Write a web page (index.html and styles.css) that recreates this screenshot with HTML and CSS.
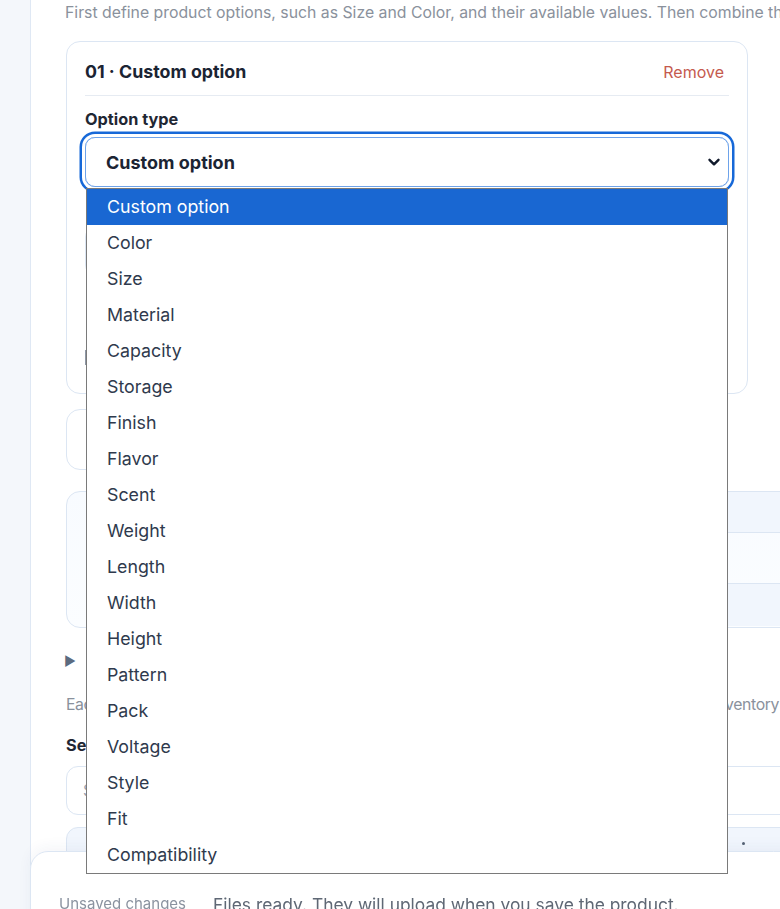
FILE: index.html
```html
<!DOCTYPE html>
<html lang="en">
<head>
    <meta charset="UTF-8">
    <meta name="viewport" content="width=device-width, initial-scale=1.0">
    <title>Product options</title>
    <link rel="stylesheet" href="styles.css">
</head>
<body>
    <div class="page">
        <main class="panel">
            <p class="intro">First define product options, such as Size and Color, and their available values. Then combine them into variants.</p>

            <section class="option-card">
                <header class="option-head">
                    <h3>01 · Custom option</h3>
                    <button class="remove">Remove</button>
                </header>

                <label class="field-label">Option type</label>
                <div class="select-wrap">
                    <div class="select">
                        <span>Custom option</span>
                        <svg class="chevron" width="14" height="14" viewBox="0 0 14 14">
                            <path d="M2.5 4.8 L7 9.3 L11.5 4.8" fill="none" stroke="#111a2c" stroke-width="2.4" stroke-linecap="round" stroke-linejoin="round"/>
                        </svg>
                    </div>
                    <ul class="select-menu">
                        <li class="active">Custom option</li>
                        <li>Color</li>
                        <li>Size</li>
                        <li>Material</li>
                        <li>Capacity</li>
                        <li>Storage</li>
                        <li>Finish</li>
                        <li>Flavor</li>
                        <li>Scent</li>
                        <li>Weight</li>
                        <li>Length</li>
                        <li>Width</li>
                        <li>Height</li>
                        <li>Pattern</li>
                        <li>Pack</li>
                        <li>Voltage</li>
                        <li>Style</li>
                        <li>Fit</li>
                        <li>Compatibility</li>
                    </ul>
                </div>

                <div class="input"></div>
                <div class="value-row">
                    <span class="value-tag"></span>
                </div>
            </section>

            <div class="add-option"></div>

            <div class="variants-box">
                <div class="row head"></div>
                <div class="row"></div>
                <div class="row alt"></div>
            </div>

            <div class="advanced"><span class="caret">▶</span></div>

            <p class="hint">Each combination of option values becomes a separate variant with its own price, SKU and inventory</p>

            <label class="field-label search-label">Search variants</label>
            <div class="search">Search by SKU or value</div>

            <div class="table-head"><span class="dot"></span></div>
        </main>

        <footer class="save-bar">
            <span class="status">Unsaved changes</span>
            <span class="files">Files ready. They will upload when you save the product.</span>
        </footer>
    </div>
</body>
</html>
```

FILE: styles.css
```css
* {
    margin: 0;
    padding: 0;
    box-sizing: border-box;
}

body {
    font-family: Inter, "Noto Sans", sans-serif;
    background: #f4f7fb;
    color: #1f2937;
    overflow: hidden;
}

.page {
    height: 909px;
    padding-left: 30px;
    overflow: hidden;
}

.panel {
    width: 1100px;
    min-height: 909px;
    background: #fff;
    border-left: 1px solid #dfe8f4;
    padding: 3px 0 0 35px;
}

.intro {
    margin-left: -1px;
    font-size: 15.8px;
    line-height: 20px;
    color: #8a919c;
    white-space: nowrap;
}

.option-card {
    width: 682px;
    height: 353px;
    margin-top: 18px;
    border: 1px solid #dce6f3;
    border-radius: 14px;
    padding: 0 18px;
}

.option-head {
    display: flex;
    justify-content: space-between;
    align-items: center;
    padding: 19px 0 12px;
    border-bottom: 1px solid #e6ebf2;
}

.option-head h3 {
    font-size: 17.8px;
    line-height: 22px;
    font-weight: 700;
    color: #1b2433;
}

.remove {
    background: none;
    border: none;
    font-family: inherit;
    font-size: 16px;
    color: #c55a4e;
    padding-right: 5px;
    cursor: pointer;
}

.field-label {
    display: block;
    margin-top: 13px;
    font-size: 16.3px;
    line-height: 20px;
    font-weight: 700;
    color: #1f2733;
}

.select-wrap {
    position: relative;
    margin-top: 8px;
}

.select {
    height: 50px;
    border: 1px solid #6ea3ea;
    border-radius: 10px;
    display: flex;
    align-items: center;
    justify-content: space-between;
    padding: 0 7px 0 20px;
    font-size: 18px;
    font-weight: 700;
    color: #1b2433;
    box-shadow: 0 0 0 3px #fff, 0 0 0 5.5px #1668d8;
}

.select-menu {
    position: absolute;
    top: 51px;
    left: 1px;
    right: 1px;
    list-style: none;
    background: #fff;
    border: 1px solid #7a7a7a;
    z-index: 20;
}

.select-menu li {
    height: 36px;
    line-height: 36px;
    padding-left: 20px;
    font-size: 17.8px;
    color: #2f3a4d;
}

.select-menu li.active {
    background: #1967d2;
    color: #fff;
}

.input {
    width: 600px;
    margin-top: 40px;
    height: 48px;
    border: 1px solid #dce6f3;
    border-radius: 10px;
}

.value-row {
    margin-top: 74px;
}

.value-tag {
    display: inline-block;
    height: 15px;
    width: 40px;
    border-left: 2px solid #8f98a6;
}

.add-option {
    width: 440px;
    height: 61px;
    margin-top: 15px;
    background: #fff;
    border: 1px solid #dce6f3;
    border-radius: 14px;
}

.variants-box {
    width: 1000px;
    height: 137px;
    margin-top: 21px;
    border: 1px solid #dce6f3;
    border-radius: 14px;
    background: linear-gradient(180deg, #f8fbff, #fbfdff);
    overflow: hidden;
}

.variants-box .row {
    height: 51px;
    margin-left: 640px;
    border-bottom: 1px solid #dce6f3;
}

.variants-box .row.head {
    height: 41px;
    background: #f1f6fd;
}

.variants-box .row.alt {
    height: 42px;
    background: #f1f6fd;
    border-bottom: none;
}

.advanced {
    margin-top: 22px;
    height: 20px;
    line-height: 20px;
    margin-left: -2px;
}

.caret {
    font-size: 13px;
    color: #5b6b80;
}

.hint {
    margin-top: 25px;
    font-size: 15.8px;
    line-height: 20px;
    letter-spacing: -0.4px;
    color: #8a919c;
    white-space: nowrap;
}

.search-label {
    margin-top: 20px;
}

.search {
    width: 1000px;
    height: 49px;
    margin-top: 11px;
    border: 1px solid #dce6f3;
    border-radius: 12px;
    padding: 0 16px;
    line-height: 47px;
    font-size: 16px;
    color: #9aa3af;
}

.table-head {
    position: relative;
    width: 1000px;
    height: 40px;
    margin-top: 12px;
    background: #f1f6fd;
    border: 1px solid #dce6f3;
    border-radius: 12px 0 0 0;
}

.dot {
    position: absolute;
    left: 675px;
    top: 14px;
    width: 3px;
    height: 3px;
    border-radius: 50%;
    background: #556274;
}

.save-bar {
    position: fixed;
    left: 30px;
    top: 851px;
    width: 1000px;
    height: 120px;
    background: #fff;
    border: 1px solid #dce6f3;
    border-radius: 18px 0 0 0;
    box-shadow: 0 -4px 14px rgba(30, 60, 110, 0.05);
    padding: 42px 0 0 28px;
    display: flex;
    gap: 27px;
    z-index: 10;
}

.save-bar .status {
    font-size: 15px;
    color: #8b93a0;
}

.save-bar .files {
    font-size: 17.4px;
    color: #5f6875;
}
```
